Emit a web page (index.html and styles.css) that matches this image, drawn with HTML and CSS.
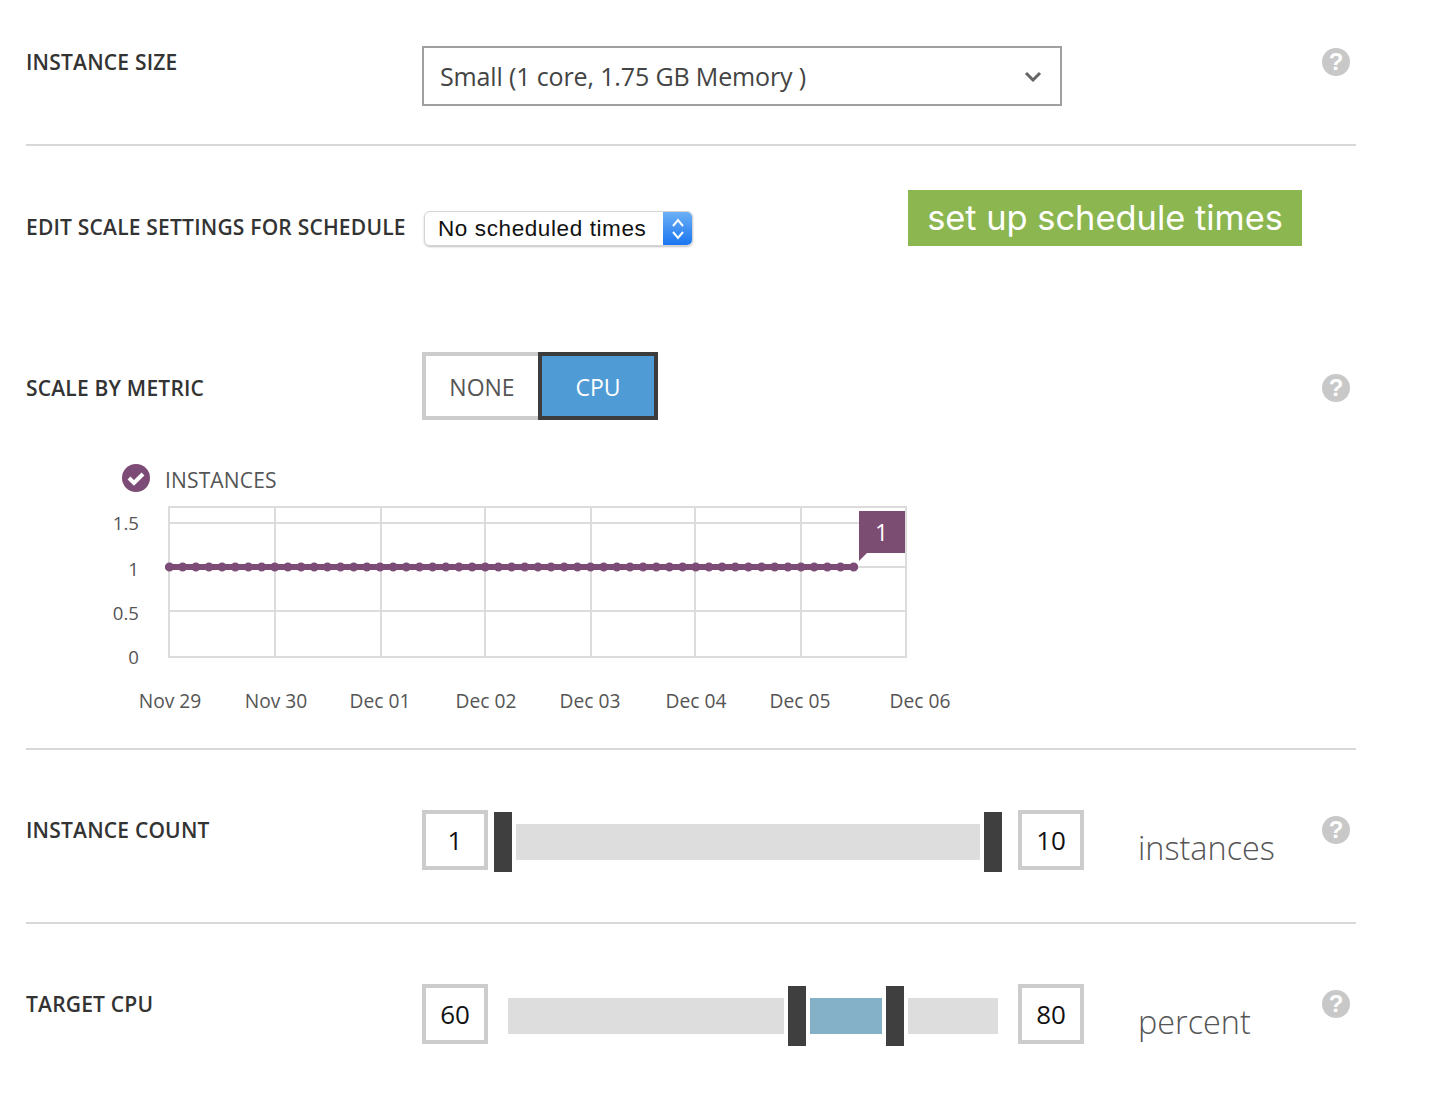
FILE: index.html
```html
<!DOCTYPE html>
<html lang="en">
<head>
  <meta charset="UTF-8">
  <title>Scale Settings</title>
  <link rel="stylesheet" href="styles.css">
</head>
<body>

  <div class="page">

    <section class="row row-size">
      <div class="label">INSTANCE SIZE</div>
      <div class="size-select">
        <span>Small (1 core, 1.75 GB Memory )</span>
        <svg class="chevron" width="18" height="12" viewBox="0 0 18 12"><path d="M2 3l7 7 7-7" fill="none" stroke="#666" stroke-width="3"/></svg>
      </div>
      <div class="help">?</div>
    </section>

    <section class="row-metric">
      <div class="row row-schedule">
        <div class="label label-tall">EDIT SCALE SETTINGS FOR SCHEDULE</div>
        <div class="schedule-control">
          <div class="mac-select">
            <span class="mac-text">No scheduled times</span>
            <span class="mac-arrows">
              <svg width="14" height="24" viewBox="0 0 14 24"><path d="M2 9l5-6 5 6M2 15l5 6 5-6" fill="none" stroke="#fff" stroke-width="2"/></svg>
            </span>
          </div>
          <div class="green-btn">set up schedule times</div>
        </div>
      </div>

      <div class="row row-toggle">
        <div class="label label-center">SCALE BY METRIC</div>
        <div class="toggle">
          <div class="toggle-none">NONE</div>
          <div class="toggle-cpu">CPU</div>
        </div>
        <div class="help help-metric">?</div>
      </div>

      <svg class="chart" width="860" height="260" viewBox="110 460 860 260">
        <circle cx="136" cy="478" r="14" fill="#7d4c76"/>
        <path d="M129 478l5 5 9-9" fill="none" stroke="#fff" stroke-width="4"/>
        <text class="legend" x="165" y="488">INSTANCES</text>

        <g class="grid">
          <rect x="169" y="507" width="737" height="150"/>
          <path d="M169 523H906M169 567H906M169 611H906"/>
          <path d="M275 507V657M381 507V657M485 507V657M591 507V657M695 507V657M801 507V657"/>
        </g>

        <g class="series-wrap">
          <line x1="168" y1="567" x2="855" y2="567" class="series"/>
          <line x1="169.5" y1="567" x2="856" y2="567" class="series-dots"/>
        </g>

        <polygon points="859,511 905,511 905,553 867,553 859,561" fill="#7c4d73"/>
        <text class="flag" x="881.500" y="541">1</text>

        <g class="axis-y">
          <text x="139" y="530">1.5</text>
          <text x="139" y="576">1</text>
          <text x="139" y="620">0.5</text>
          <text x="139" y="664">0</text>
        </g>
        <g class="axis-x">
          <text x="170" y="708">Nov 29</text>
          <text x="276" y="708">Nov 30</text>
          <text x="380" y="708">Dec 01</text>
          <text x="486" y="708">Dec 02</text>
          <text x="590" y="708">Dec 03</text>
          <text x="696" y="708">Dec 04</text>
          <text x="800" y="708">Dec 05</text>
          <text x="920" y="708">Dec 06</text>
        </g>
      </svg>
    </section>

    <section class="row row-count">
      <div class="label">INSTANCE COUNT</div>
      <div class="slider">
        <div class="value">1</div>
        <div class="handle handle-first"></div>
        <div class="track track-count"></div>
        <div class="handle"></div>
        <div class="value value-max">10</div>
        <div class="unit">instances</div>
      </div>
      <div class="help">?</div>
    </section>

    <section class="row row-cpu">
      <div class="label">TARGET CPU</div>
      <div class="slider">
        <div class="value">60</div>
        <div class="track track-low"></div>
        <div class="handle"></div>
        <div class="track track-active"></div>
        <div class="handle"></div>
        <div class="track track-high"></div>
        <div class="value value-max">80</div>
        <div class="unit">percent</div>
      </div>
      <div class="help">?</div>
    </section>

  </div>

</body>
</html>
```

FILE: styles.css
```css
body {
  margin: 0;
  background-color: #fff;
  font-family: "Open Sans", Arial, sans-serif;
  color: #333;
}

.page {
  width: 1330px;
  margin-left: 26px;
}

.row {
  display: grid;
  grid-template-columns: 396px 900px 28px;
  align-items: start;
}

.row-size {
  padding-top: 46px;
  height: 98px;
  border-bottom: 2px solid #d8d8d8;
}

.row-metric {
  height: 602px;
  border-bottom: 2px solid #d8d8d8;
}

.row-schedule {
  padding-top: 44px;
}

.row-toggle {
  margin-top: 106px;
}

.row-count {
  height: 172px;
  border-bottom: 2px solid #d8d8d8;
}

.row-cpu {
  height: 170px;
}

.label {
  font-size: 21px;
  line-height: 28px;
  font-weight: 600;
  letter-spacing: 0.2px;
  color: #333;
  margin-top: 2px;
  white-space: nowrap;
}

.row-count .label,
.row-cpu .label {
  margin-top: 66px;
}

.label-tall {
  margin-top: 23px;
}

.label-center {
  margin-top: 22px;
}

.help {
  width: 28px;
  height: 28px;
  margin-top: 2px;
  border-radius: 50%;
  background-color: #c8c8c8;
  color: #fff;
  font-family: "Liberation Sans", Arial, sans-serif;
  font-weight: 700;
  font-size: 24px;
  line-height: 28px;
  text-align: center;
}

.help-metric {
  margin-top: 22px;
}

.row-count .help,
.row-cpu .help {
  margin-top: 66px;
}

.size-select {
  box-sizing: border-box;
  width: 640px;
  height: 60px;
  border: 2px solid #a0a0a0;
  padding: 0 18px 0 16px;
  display: flex;
  align-items: center;
  justify-content: space-between;
  font-size: 25px;
  letter-spacing: -0.14px;
  color: #444;
}

.schedule-control {
  display: flex;
  align-items: flex-start;
}

.mac-select {
  box-sizing: border-box;
  width: 269px;
  height: 35px;
  margin: 21px 0 0 2px;
  display: flex;
  justify-content: space-between;
  border: 1px solid #d4d4d4;
  border-radius: 6px;
  box-shadow: 0 1px 2px rgba(0, 0, 0, 0.25);
  overflow: hidden;
  font-family: "Liberation Sans", Arial, sans-serif;
  font-size: 22.5px;
  letter-spacing: 0.6px;
  color: #111;
}

.mac-text {
  padding-left: 13px;
  line-height: 33px;
}

.mac-arrows {
  width: 29px;
  display: flex;
  align-items: center;
  justify-content: center;
  background: linear-gradient(#6cb0f7, #1a75f0);
}

.green-btn {
  width: 394px;
  height: 56px;
  margin-left: 215px;
  background-color: #8cb64f;
  color: #fff;
  font-family: Inter, Roboto, Arial, sans-serif;
  font-size: 34.4px;
  line-height: 56px;
  text-align: center;
}

.toggle {
  display: flex;
  width: 236px;
  height: 68px;
  font-size: 23px;
  line-height: 62px;
  text-align: center;
}

.toggle-none {
  box-sizing: border-box;
  width: 118px;
  border: 4px solid #ccc;
  border-right: 0;
  padding-right: 2px;
  color: #555;
}

.toggle-cpu {
  box-sizing: border-box;
  width: 120px;
  margin-left: -2px;
  border: 4px solid #3c3c3c;
  background-color: #4f9bd5;
  color: #fff;
}

.chart {
  display: block;
  margin: 40px 0 0 84px;
}

.chart text {
  font-family: "Open Sans", Arial, sans-serif;
}

.chart .legend {
  font-size: 21px;
  letter-spacing: 0.15px;
  fill: #555;
}

.grid {
  filter: blur(0.7px);
}

.grid rect,
.grid path {
  fill: none;
  stroke: #dcdcdc;
  stroke-width: 2;
}

.series-wrap {
  filter: blur(0.6px);
}

.series {
  stroke: #7d4c76;
  stroke-width: 6;
  stroke-linecap: round;
}

.series-dots {
  stroke: #7d4c76;
  stroke-width: 9;
  stroke-linecap: round;
  stroke-dasharray: 0 13.157;
}

.chart .flag {
  font-size: 23px;
  fill: #fff;
  text-anchor: middle;
}

.axis-y text {
  font-size: 18.6px;
  fill: #555;
  text-anchor: end;
}

.axis-x text {
  font-size: 19.2px;
  fill: #555;
  text-anchor: middle;
}

.slider {
  display: flex;
  align-items: flex-start;
}

.value {
  box-sizing: border-box;
  width: 66px;
  height: 60px;
  margin-top: 60px;
  border: 4px solid #ccc;
  font-size: 26px;
  line-height: 52px;
  text-align: center;
  color: #111;
}

.handle {
  width: 18px;
  height: 60px;
  margin-top: 62px;
  background-color: #3f3f3f;
}

.handle-first {
  margin-left: 6px;
}

.track {
  height: 36px;
  margin: 74px 4px 0;
  background-color: #ddd;
}

.track-count {
  width: 464px;
}

.track-low {
  width: 276px;
  margin-left: 20px;
}

.track-active {
  width: 72px;
  background-color: #84b1c8;
}

.track-high {
  width: 90px;
  margin-right: 20px;
}

.row-count .value-max {
  margin-left: 16px;
}

.unit {
  margin: 75px 0 0 54px;
  font-size: 32.4px;
  line-height: 44px;
  font-weight: 300;
  color: #555;
}
```
